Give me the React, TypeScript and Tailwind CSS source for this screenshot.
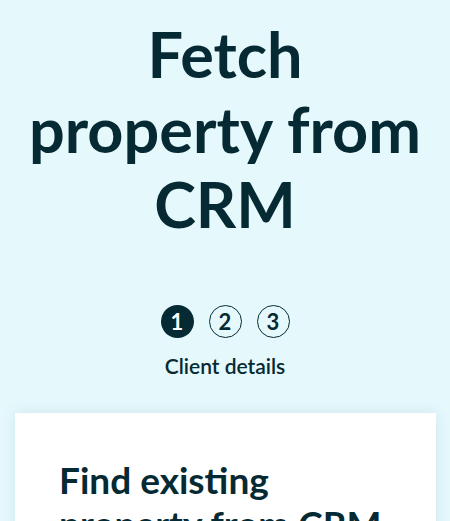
import React from "react";

export default function App() {
  const font = { fontFamily: "Lato, 'Noto Sans', sans-serif" };
  return (
    <div className="h-[521px] w-[450px] bg-[#e5f8fc] text-[#062a33] overflow-hidden" style={font}>
      <h1 className="pt-[16px] text-center text-[63px] leading-[75px] font-bold">
        Fetch
        <br />
        property from
        <br />
        CRM
      </h1>
      <div className="mt-[64px] flex justify-center gap-[15px]">
        <div className="w-[33px] h-[33px] rounded-full bg-[#062a33] text-white flex items-center justify-center text-[22px] font-bold">1</div>
        <div className="w-[33px] h-[33px] rounded-full border-[1.5px] border-[#062a33] flex items-center justify-center text-[22px] font-bold">2</div>
        <div className="w-[33px] h-[33px] rounded-full border-[1.5px] border-[#062a33] flex items-center justify-center text-[22px] font-bold">3</div>
      </div>
      <p className="mt-[15px] text-center text-[21px] leading-[25px] font-semibold">Client details</p>
      <div className="mt-[35px] mx-[15px] w-[421px] bg-white shadow-[0_0_12px_rgba(60,140,160,0.15)] px-[44px] pt-[45px] pb-10">
        <h2 className="text-[37px] leading-[44px] font-bold">
          Find existing
          <br />
          property from CRM
        </h2>
      </div>
    </div>
  );
}
